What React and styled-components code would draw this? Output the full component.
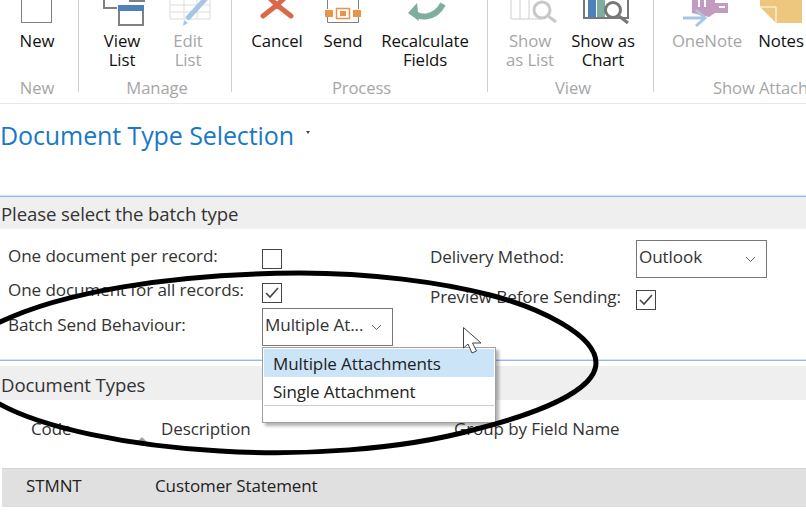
import React from 'react';
import styled, { createGlobalStyle } from 'styled-components';

const GlobalStyle = createGlobalStyle`
  html, body {
    margin: 0;
    padding: 0;
    background: #ffffff;
  }
  body {
    font-family: "Open Sans", "Noto Sans", "Liberation Sans", sans-serif;
    color: #333333;
  }
`;

const Page = styled.div`
  position: relative;
  width: 806px;
  height: 529px;
  overflow: hidden;
  background: #ffffff;
`;

const Ribbon = styled.div`
  display: flex;
  height: 103px;
  overflow: hidden;
  border-bottom: 1px solid #e8e8e8;
`;

const Group = styled.div`
  display: flex;
  flex-direction: column;
  flex: none;
  width: ${p => p.$width}px;
  height: 92px;
  border-right: ${p => (p.$last ? 'none' : '1px solid #cfcfcf')};
  box-sizing: border-box;
`;

const Buttons = styled.div`
  display: flex;
  flex: none;
  height: 78px;
  padding-left: ${p => p.$pad || 0}px;
`;

const RibbonButton = styled.div`
  flex: none;
  width: ${p => p.$width}px;
  display: flex;
  flex-direction: column;
  align-items: center;
  font-size: 16.8px;
  line-height: 19px;
  text-align: center;
  letter-spacing: -0.1px;
  color: ${p => (p.$disabled ? '#a6a6a6' : '#111111')};

  svg {
    flex: none;
    display: block;
    margin-bottom: 1px;
  }
`;

const GroupLabel = styled.div`
  flex: none;
  font-size: 16.6px;
  line-height: 20px;
  color: #a6a6a6;
  letter-spacing: -0.1px;
  white-space: nowrap;
  padding-left: ${p => p.$left || 0}px;
  text-align: ${p => (p.$left ? 'left' : 'center')};
  width: ${p => (p.$center ? `${p.$center}px` : 'auto')};
`;

const TitleRow = styled.div`
  display: flex;
  align-items: center;
  height: 62px;
`;

const Title = styled.h1`
  margin: 0;
  font-size: 25px;
  font-weight: 400;
  letter-spacing: -0.1px;
  color: #1a78c6;
`;

const TitleCaret = styled.span`
  width: 0;
  height: 0;
  margin: -6px 0 0 12px;
  border-left: 2.5px solid transparent;
  border-right: 2.5px solid transparent;
  border-top: 3px solid #444444;
`;

const SectionHead = styled.div`
  margin-top: ${p => p.$top}px;
  border-top: 1px solid #8fbaf0;
  box-shadow: 0 -1px 0 #d4e4f8;
  padding-top: ${p => p.$gap}px;
`;

const SectionBand = styled.div`
  height: ${p => p.$height}px;
  box-sizing: border-box;
  display: flex;
  align-items: center;
  padding: ${p => p.$nudge}px 0 0 1px;
  background: #efefef;
  font-size: 18.6px;
  letter-spacing: -0.1px;
  color: #333333;
`;

const Form = styled.div`
  display: flex;
  height: 130px;
  padding-left: 8px;
`;

const Column = styled.div`
  display: flex;
  flex-direction: column;
  flex: none;
  width: ${p => p.$width}px;
  padding-top: ${p => p.$top}px;
`;

const Field = styled.div`
  display: flex;
  align-items: flex-start;
  height: ${p => p.$height}px;
`;

const FieldLabel = styled.div`
  flex: none;
  width: ${p => p.$width}px;
  margin-top: ${p => (p.$tall ? 6 : -4)}px;
  font-size: 17.1px;
  line-height: 22px;
  letter-spacing: -0.1px;
  color: #333333;
  white-space: nowrap;
`;

const Check = styled.div`
  width: 20px;
  height: 20px;
  box-sizing: border-box;
  border: 1px solid #444444;
  display: flex;
  align-items: center;
  justify-content: center;
`;

const SelectWrap = styled.div`
  position: relative;
`;

const Select = styled.div`
  width: 131px;
  height: 38px;
  box-sizing: border-box;
  border: 1px solid #777777;
  display: flex;
  align-items: center;
  justify-content: space-between;
  padding: 0 10px 5px 2px;
  font-size: 17.1px;
  letter-spacing: -0.1px;
  color: #333333;

  svg {
    margin-top: 6px;
  }
`;

const Dropdown = styled.div`
  position: absolute;
  top: 39px;
  left: 0;
  width: 234px;
  height: 76px;
  box-sizing: border-box;
  padding: 1px;
  background: #ffffff;
  border: 1px solid #a0a0a0;
  box-shadow: 3px 3px 3px rgba(0, 0, 0, 0.3);
  z-index: 2;
`;

const Option = styled.div`
  height: 28px;
  display: flex;
  align-items: center;
  padding-left: 9px;
  font-size: 17px;
  letter-spacing: -0.1px;
  color: #222222;
  background: ${p => (p.$active ? '#cce4f7' : 'transparent')};
  border-bottom: ${p => (p.$last ? '1px solid #cccccc' : 'none')};
`;

const TableHead = styled.div`
  display: flex;
  align-items: center;
  height: 68px;
  padding-bottom: 12px;
  box-sizing: border-box;
  font-size: 17px;
  letter-spacing: -0.1px;
  color: #333333;
`;

const HeadCell = styled.div`
  position: relative;
  flex: none;
  width: ${p => p.$width}px;
  padding-left: ${p => p.$pad}px;
  box-sizing: border-box;
`;

const SortMark = styled.span`
  position: absolute;
  left: 137px;
  top: 20px;
  width: 0;
  height: 0;
  border-left: 5px solid transparent;
  border-right: 5px solid transparent;
  border-bottom: 5px solid #a0a0a0;
`;

const TableRow = styled.div`
  display: flex;
  align-items: center;
  height: 39px;
  margin-left: 2px;
  padding-bottom: 5px;
  background: #e0e0e0;
  border-top: 1px solid #d4d4d4;
  box-sizing: border-box;
  font-size: 17px;
  letter-spacing: -0.1px;
  color: #222222;
`;

const RowCell = styled.div`
  flex: none;
  width: ${p => p.$width}px;
  padding-left: ${p => p.$pad}px;
  box-sizing: border-box;
`;

const Overlay = styled.svg`
  position: absolute;
  left: 0;
  top: 0;
  pointer-events: none;
  z-index: ${p => p.$z};
`;

const Icon = ({ children }) => (
  <svg width="56" height="30" viewBox="0 0 56 30" style={{ overflow: 'visible' }}>
    {children}
  </svg>
);

const ChevronIcon = () => (
  <svg width="11" height="7" viewBox="0 0 11 7">
    <path d="M1 1l4.5 4.5L10 1" fill="none" stroke="#666666" strokeWidth="1" />
  </svg>
);

const CheckMark = () => (
  <svg width="14" height="12" viewBox="0 0 14 12">
    <path d="M1 6l4 4 8-9" fill="none" stroke="#444444" strokeWidth="1.6" />
  </svg>
);

const NewIcon = () => (
  <Icon>
    <rect x="12.5" y="-10" width="30" height="32.5" fill="none" stroke="#808080" strokeWidth="1" />
  </Icon>
);

const ViewListIcon = () => (
  <Icon>
    <path d="M10-4V8h13M35 1h16" fill="none" stroke="#808080" strokeWidth="2" />
    <rect x="25" y="6" width="24" height="19" fill="#ffffff" stroke="#808080" strokeWidth="2" />
    <rect x="24" y="5" width="26" height="6" fill="#4e81b8" />
  </Icon>
);

const EditListIcon = () => (
  <Icon>
    <path d="M10 19H50M10 12H50M10 5H50M10-3V19M24-3V19M37-3V19M50-3V19" fill="none" stroke="#dcdcdc" strokeWidth="1" />
    <path d="M27 19L48-4" fill="none" stroke="#a8c6e3" strokeWidth="5" />
    <path d="M23 26l1-6 4 3z" fill="#a8c6e3" />
  </Icon>
);

const CancelIcon = () => (
  <Icon>
    <path d="M14-8L28 5M42-8L28 5M28 5L14 16M28 5L42 16" fill="none" stroke="#d9694a" strokeWidth="5" strokeLinecap="round" />
  </Icon>
);

const SendIcon = () => (
  <Icon>
    <path d="M12.5-3V22.5H43.5V-3" fill="none" stroke="#808080" strokeWidth="1" />
    <rect x="9" y="9" width="10" height="8" fill="#ffffff" />
    <rect x="37" y="9" width="10" height="8" fill="#ffffff" />
    <rect x="10" y="10" width="8" height="7" fill="#e8954a" />
    <rect x="38" y="10" width="8" height="7" fill="#e8954a" />
    <rect x="21.5" y="8.5" width="13" height="10" fill="#ffffff" stroke="#e8954a" strokeWidth="1.5" />
    <rect x="25" y="11" width="6" height="5" fill="#e8954a" />
  </Icon>
);

const RecalcIcon = () => (
  <Icon>
    <path d="M15 10C21 20 38 19 46 4" fill="none" stroke="#7fad9e" strokeWidth="6" />
    <path d="M20 3L11 13L22 21z" fill="#7fad9e" />
  </Icon>
);

const ListViewIcon = () => (
  <Icon>
    <path d="M9-3V19H40M18-3V19M27-3V19" fill="none" stroke="#d0d0d0" strokeWidth="1" />
    <circle cx="40" cy="10" r="8" fill="#ffffff" stroke="#c8c8c8" strokeWidth="3" />
    <path d="M46 16l8 6" stroke="#c8c8c8" strokeWidth="3" />
  </Icon>
);

const ChartViewIcon = () => (
  <Icon>
    <path d="M9-3V18H53V-3" fill="none" stroke="#777777" strokeWidth="2" />
    <rect x="13" y="-3" width="8" height="20" fill="#4e81b8" />
    <rect x="22" y="-3" width="8" height="20" fill="#7fad9e" />
    <circle cx="38" cy="10" r="7.5" fill="#ffffff" stroke="#777777" strokeWidth="3" />
    <path d="M44 16l9 7" stroke="#777777" strokeWidth="3" />
  </Icon>
);

const OneNoteIcon = () => (
  <Icon>
    <path d="M13-4H36V3H49V13H36L30 17L13 13z" fill="#c39bc0" />
    <path d="M20-2V7M26-2V7M40 2H46M40 7H46" stroke="#ffffff" strokeWidth="2" />
    <path d="M4 18H24" stroke="#a8c6e3" strokeWidth="3" />
    <path d="M17 10L26 18L17 26" fill="none" stroke="#a8c6e3" strokeWidth="3" />
  </Icon>
);

const NotesIcon = () => (
  <Icon>
    <path d="M7-4H49V23H23L7 7z" fill="#eec77e" />
    <path d="M7 7H23V23" fill="none" stroke="#ffffff" strokeWidth="1" />
  </Icon>
);

const App = () => (
  <Page>
    <GlobalStyle />
    <Ribbon>
      <Group $width={79}>
        <Buttons>
          <RibbonButton $width={74}><NewIcon />New</RibbonButton>
        </Buttons>
        <GroupLabel $center={74}>New</GroupLabel>
      </Group>
      <Group $width={153}>
        <Buttons $pad={10}>
          <RibbonButton $width={66}><ViewListIcon />View<br />List</RibbonButton>
          <RibbonButton $width={66} $disabled><EditListIcon />Edit<br />List</RibbonButton>
        </Buttons>
        <GroupLabel $center={156}>Manage</GroupLabel>
      </Group>
      <Group $width={256}>
        <Buttons $pad={12}>
          <RibbonButton $width={66}><CancelIcon />Cancel</RibbonButton>
          <RibbonButton $width={66}><SendIcon />Send</RibbonButton>
          <RibbonButton $width={98}><RecalcIcon />Recalculate<br />Fields</RibbonButton>
        </Buttons>
        <GroupLabel $center={259}>Process</GroupLabel>
      </Group>
      <Group $width={166}>
        <Buttons $pad={9}>
          <RibbonButton $width={66} $disabled><ListViewIcon />Show<br />as List</RibbonButton>
          <RibbonButton $width={80}><ChartViewIcon />Show as<br />Chart</RibbonButton>
        </Buttons>
        <GroupLabel $center={170}>View</GroupLabel>
      </Group>
      <Group $width={152} $last>
        <Buttons $pad={8}>
          <RibbonButton $width={90} $disabled><OneNoteIcon />OneNote</RibbonButton>
          <RibbonButton $width={58}><NotesIcon />Notes</RibbonButton>
        </Buttons>
        <GroupLabel $left={59}>Show Attachments</GroupLabel>
      </Group>
    </Ribbon>

    <TitleRow>
      <Title>Document Type Selection</Title>
      <TitleCaret />
    </TitleRow>

    <SectionHead $top={30} $gap={0}>
      <SectionBand $height={32} $nudge={0}>Please select the batch type</SectionBand>
    </SectionHead>

    <Form>
      <Column $width={422} $top={20}>
        <Field $height={34}>
          <FieldLabel $width={254}>One document per record:</FieldLabel>
          <Check />
        </Field>
        <Field $height={25}>
          <FieldLabel $width={254}>One document for all records:</FieldLabel>
          <Check><CheckMark /></Check>
        </Field>
        <Field $height={38}>
          <FieldLabel $width={254} $tall>Batch Send Behaviour:</FieldLabel>
          <SelectWrap>
            <Select>Multiple At...<ChevronIcon /></Select>
            <Dropdown>
              <Option $active>Multiple Attachments</Option>
              <Option $last>Single Attachment</Option>
            </Dropdown>
          </SelectWrap>
        </Field>
      </Column>
      <Column $width={337} $top={11}>
        <Field $height={50}>
          <FieldLabel $width={206} $tall>Delivery Method:</FieldLabel>
          <Select>Outlook<ChevronIcon /></Select>
        </Field>
        <Field $height={25}>
          <FieldLabel $width={206}>Preview Before Sending:</FieldLabel>
          <Check><CheckMark /></Check>
        </Field>
      </Column>
    </Form>

    <SectionHead $top={1} $gap={5}>
      <SectionBand $height={34} $nudge={2}>Document Types</SectionBand>
    </SectionHead>

    <TableHead>
      <HeadCell $width={130} $pad={31}>Code<SortMark /></HeadCell>
      <HeadCell $width={324} $pad={31}>Description</HeadCell>
      <HeadCell $width={352} $pad={0}>Group by Field Name</HeadCell>
    </TableHead>
    <TableRow>
      <RowCell $width={153} $pad={24}>STMNT</RowCell>
      <RowCell $width={500} $pad={0}>Customer Statement</RowCell>
    </TableRow>

    <Overlay $z={3} width="806" height="529" viewBox="0 0 806 529">
      <path
        d="M-4 324C60 292 170 274 300 273C370 273 440 282 490 295C540 308 596 335 596 363C596 390 540 413 473 430C400 450 300 456 220 451C130 446 40 428 -4 402"
        fill="none"
        stroke="#000000"
        strokeWidth="5"
      />
    </Overlay>
    <Overlay $z={4} width="806" height="529" viewBox="0 0 806 529">
      <path
        d="M463.5 327.5V348L468 344L472 353L476.5 351L472.5 343H481z"
        fill="#ffffff"
        stroke="#444444"
        strokeWidth="1"
      />
    </Overlay>
  </Page>
);

export default App;
